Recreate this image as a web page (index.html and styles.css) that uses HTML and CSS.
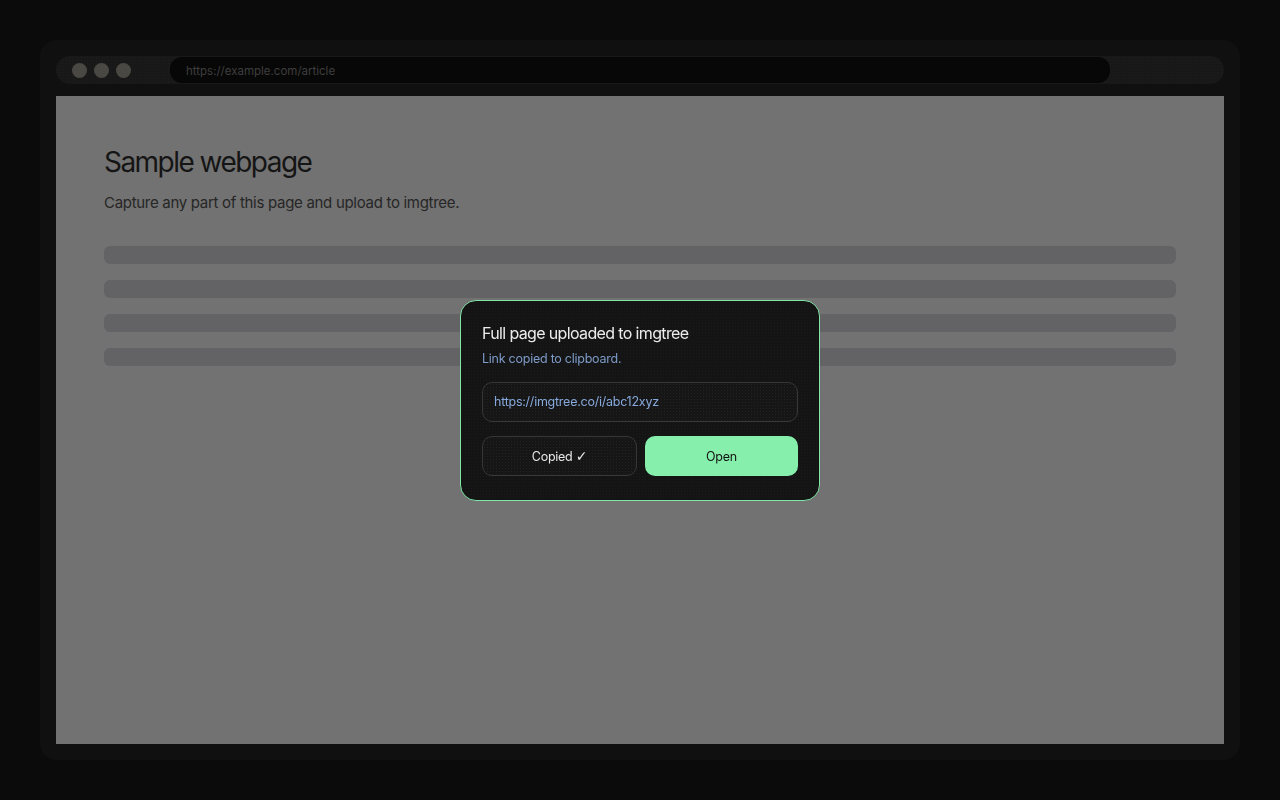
FILE: index.html
```html
<!DOCTYPE html>
<html lang="en">
<head>
    <meta charset="UTF-8">
    <meta name="viewport" content="width=device-width, initial-scale=1.0">
    <title>imgtree capture</title>
    <link rel="stylesheet" href="styles.css">
</head>
<body>
    <div class="browser">
        <div class="titlebar">
            <div class="dots">
                <span class="dot"></span>
                <span class="dot"></span>
                <span class="dot"></span>
            </div>
            <div class="address">https://example.com/article</div>
        </div>
        <div class="page">
            <h1>Sample webpage</h1>
            <p>Capture any part of this page and upload to imgtree.</p>
            <div class="lines">
                <div class="line"></div>
                <div class="line"></div>
                <div class="line"></div>
                <div class="line"></div>
            </div>
        </div>
    </div>

    <div class="toast">
        <h2>Full page uploaded to imgtree</h2>
        <p class="sub">Link copied to clipboard.</p>
        <div class="link-box">https://imgtree.co/i/abc12xyz</div>
        <div class="actions">
            <button class="btn btn-ghost">Copied <span class="check">✓</span></button>
            <button class="btn btn-primary">Open</button>
        </div>
    </div>
</body>
</html>
```

FILE: styles.css
```css
body {
    margin: 0;
    background: #0b0b0b;
    font-family: Inter, "Noto Sans", sans-serif;
    padding: 40px;
    height: 720px;
}
.browser {
    background: #101010;
    border-radius: 16px;
    padding: 16px;
    height: 688px;
    display: flex;
    flex-direction: column;
    gap: 12px;
}
.titlebar {
    display: flex;
    align-items: center;
    height: 28px;
    padding: 0 16px;
    border-radius: 14px;
    background-color: #181818;
    background-image: radial-gradient(rgba(255, 255, 255, 0.025) 0.6px, transparent 0.7px);
    background-size: 3px 3px;
}
.dots {
    display: flex;
    gap: 7px;
    width: 98px;
}
.dot {
    width: 15px;
    height: 15px;
    border-radius: 50%;
    background: #4a4843;
}
.address {
    width: 924px;
    height: 26px;
    line-height: 29px;
    padding-left: 16px;
    border-radius: 12px;
    background: #070707;
    color: #3e3e3e;
    font-size: 11.5px;
}
.page {
    flex: 1;
    background: #727272;
    padding: 48px;
}
.page h1 {
    margin: 0;
    font-size: 28px;
    font-weight: 400;
    line-height: 36px;
    color: #151515;
    letter-spacing: -0.055em;
}
.page p {
    margin: 14px 0 0;
    font-size: 15px;
    line-height: 18px;
    color: #262626;
    letter-spacing: -0.02em;
}
.lines {
    margin-top: 34px;
    display: flex;
    flex-direction: column;
    gap: 16px;
}
.line {
    height: 18px;
    border-radius: 6px;
    background: #636365;
}
.toast {
    position: fixed;
    left: 460px;
    top: 300px;
    width: 316px;
    padding: 21px 21px 24px;
    background-color: #141414;
    background-image: radial-gradient(rgba(255, 255, 255, 0.03) 0.6px, transparent 0.7px);
    background-size: 3px 3px;
    border: 1px solid #7fe6a6;
    border-radius: 16px;
}
.toast h2 {
    margin: 0;
    font-size: 16px;
    font-weight: 400;
    line-height: 22px;
    color: #ececec;
    letter-spacing: -0.04em;
}
.toast .sub {
    margin: 7px 0 0;
    font-size: 12.5px;
    line-height: 16px;
    color: #7d9bc8;
    letter-spacing: -0.02em;
}
.link-box {
    margin-top: 15px;
    height: 38px;
    line-height: 38px;
    padding: 0 11px;
    border: 1px solid #373737;
    border-radius: 10px;
    color: #86a9dc;
    font-size: 12.5px;
    letter-spacing: -0.02em;
    background-color: #161616;
    background-image: radial-gradient(rgba(255, 255, 255, 0.05) 0.6px, transparent 0.7px);
    background-size: 3px 3px;
}
.actions {
    display: flex;
    gap: 8px;
    margin-top: 14px;
}
.btn {
    flex: 1;
    height: 40px;
    border-radius: 10px;
    font-family: Inter, "Noto Sans", sans-serif;
    font-size: 12.5px;
    letter-spacing: -0.02em;
    cursor: pointer;
}
.check {
    font-family: "DejaVu Sans", sans-serif;
    font-size: 14px;
}
.btn-ghost {
    border: 1px solid #373737;
    color: #e6e6e6;
    background-color: #161616;
    background-image: radial-gradient(rgba(255, 255, 255, 0.05) 0.6px, transparent 0.7px);
    background-size: 3px 3px;
}
.btn-primary {
    border: none;
    background: #86efac;
    color: #111;
}
```
